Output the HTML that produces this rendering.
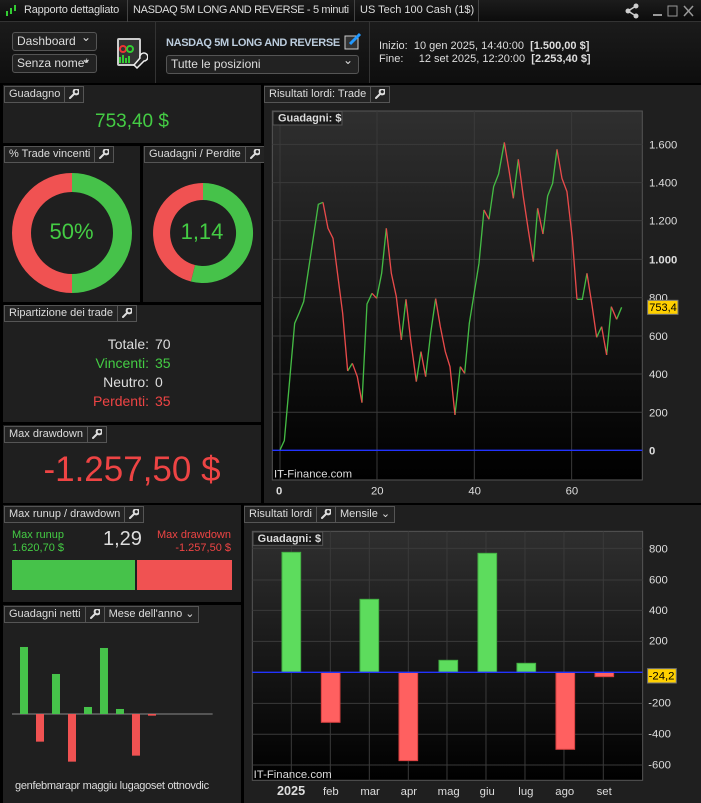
<!DOCTYPE html>
<html><head><meta charset="utf-8"><style>
*{margin:0;padding:0;box-sizing:border-box}
body{width:701px;height:803px;background:#000;font-family:"Liberation Sans",sans-serif;position:relative;overflow:hidden;color:#ddd}
.a{position:absolute}
.p{position:absolute;background:#1f1f1f}
.tab{position:absolute;height:17px;border:1px solid #555;background:#232323;font-size:11px;line-height:15px;color:#ddd;display:flex}
.tab span{padding:0 4px;border-right:1px solid #555;white-space:nowrap}
.tab span:last-child{border-right:none}
.tab svg{margin-top:2px}
.sel{position:absolute;border:1px solid #555;background:#222;border-radius:3px;font-size:12px;color:#ddd;padding-left:4px;line-height:17px;height:19px}
.sel:after{content:"⌄";position:absolute;right:5px;top:-4px;font-size:12px}
</style></head><body>
<svg width="0" height="0" style="position:absolute"><defs><symbol id="w" viewBox="0 0 10 10"><path d="M1 9L5.5 4.5M5 4 a2.6 2.6 0 1 1 1 1" stroke="#ddd" stroke-width="2" fill="none" stroke-linecap="round"/></symbol></defs></svg>
<!-- title bar -->
<div class="a" style="left:0;top:0;width:701px;height:22px;background:linear-gradient(#1c1c1c,#0c0c0c);border-bottom:1px solid #333"></div>
<svg class="a" style="left:5px;top:4px" width="14" height="14"><rect x="1" y="7" width="2" height="5" fill="#3c3"/><rect x="5" y="4" width="2" height="6" fill="#3c3"/><rect x="9" y="1" width="2" height="6" fill="#3c3"/></svg>
<div class="a" style="left:24px;top:4px;font-size:11px;color:#ddd;letter-spacing:-0.2px">Rapporto dettagliato</div>
<div class="a" style="left:127px;top:0;width:1px;height:22px;background:#444"></div>
<div class="a" style="left:133px;top:4px;font-size:11px;color:#ddd;white-space:nowrap;letter-spacing:-0.35px">NASDAQ 5M LONG AND REVERSE - 5 minuti</div>
<div class="a" style="left:354px;top:0;width:1px;height:22px;background:#444"></div>
<div class="a" style="left:360px;top:4px;font-size:11px;color:#ddd;white-space:nowrap">US Tech 100 Cash (1$)</div>
<div class="a" style="left:478px;top:0;width:1px;height:22px;background:#444"></div>
<svg class="a" style="left:625px;top:3px" width="76" height="16"><g fill="#ccc"><circle cx="11" cy="3" r="2.5"/><circle cx="3" cy="8" r="2.5"/><circle cx="11" cy="13" r="2.5"/></g><path d="M11 3L3 8L11 13" stroke="#ccc" stroke-width="1.5" fill="none"/><rect x="28" y="11" width="9" height="2" fill="#999"/><rect x="43" y="3" width="9" height="10" fill="none" stroke="#999"/><path d="M59 3l9 10M68 3l-9 10" stroke="#999" stroke-width="1.5"/></svg>
<!-- toolbar -->
<div class="a" style="left:0;top:22px;width:701px;height:61px;background:linear-gradient(#1b1b1b,#0e0e0e)"></div>
<div class="sel" style="left:12px;top:32px;width:85px">Dashboard</div>
<div class="sel" style="left:12px;top:54px;width:85px">Senza nome*</div>
<svg class="a" style="left:116px;top:37px" width="32" height="32"><rect x="1" y="1" width="24" height="28" rx="2" fill="#ccc"/><rect x="3" y="3" width="20" height="24" fill="#333"/><circle cx="7" cy="12" r="3" fill="none" stroke="#e33" stroke-width="2"/><circle cx="14" cy="12" r="3" fill="none" stroke="#3c3" stroke-width="2"/><path d="M4 26V20M7 26V18M10 26V21M13 26V19" stroke="#3c3" stroke-width="2"/><path d="M18 28l6-7 a4 4 0 1 1 4 3l-7 7z" fill="#222" stroke="#eee" stroke-width="1.5"/></svg>
<div class="a" style="left:155px;top:22px;width:1px;height:61px;background:#333"></div>
<div class="a" style="left:166px;top:37px;font-size:11px;font-weight:bold;color:#bcd;letter-spacing:-0.35px;white-space:nowrap">NASDAQ 5M LONG AND REVERSE</div>
<svg class="a" style="left:344px;top:31px" width="20" height="20"><rect x="1" y="5" width="13" height="13" fill="#333" stroke="#ccc"/><path d="M6 13l10-10" stroke="#29f" stroke-width="3"/></svg>
<div class="sel" style="left:166px;top:55px;width:193px">Tutte le posizioni</div>
<div class="a" style="left:369px;top:22px;width:1px;height:61px;background:#333"></div>
<div class="a" style="left:379px;top:40px;font-size:11px;color:#ddd;line-height:13px;white-space:pre">Inizio:  10 gen 2025, 14:40:00  <b>[1.500,00 $]</b>
Fine:     12 set 2025, 12:20:00  <b>[2.253,40 $]</b></div>

<!-- left panels -->
<div class="p" style="left:3px;top:85px;width:258px;height:58px"></div>
<div class="tab" style="left:4px;top:86px"><span>Guadagno</span><span><svg width="10" height="10"><use href="#w"/></svg></span></div>
<div class="a" style="left:3px;top:111px;width:258px;text-align:center;font-size:19px;color:#4c4">753,40 $</div>

<div class="p" style="left:3px;top:146px;width:137px;height:156px"></div>
<div class="tab" style="left:4px;top:146px"><span>% Trade vincenti</span><span><svg width="10" height="10"><use href="#w"/></svg></span></div>
<div class="p" style="left:143px;top:146px;width:118px;height:156px"></div>
<div class="tab" style="left:144px;top:146px"><span>Guadagni / Perdite</span><span><svg width="10" height="10"><use href="#w"/></svg></span></div>
<svg class="a" style="left:0;top:0" width="265" height="300">
<path d="M72 173A60 60 0 0 1 72 293L72 274A41 41 0 0 0 72 192Z" fill="#46c24a"/>
<path d="M72 173A60 60 0 0 0 72 293L72 274A41 41 0 0 1 72 192Z" fill="#f05252"/>
<path d="M203 183A50 50 0 1 1 190.9 281.5L195 265A33 33 0 1 0 203 200Z" fill="#46c24a"/>
<path d="M203 183A50 50 0 0 0 190.9 281.5L195 265A33 33 0 0 1 203 200Z" fill="#f05252"/>
</svg>
<div class="a" style="left:3px;top:219px;width:137px;text-align:center;font-size:22px;color:#4c4">50%</div>
<div class="a" style="left:143px;top:219px;width:118px;text-align:center;font-size:22px;color:#4c4">1,14</div>

<div class="p" style="left:3px;top:305px;width:258px;height:117px"></div>
<div class="tab" style="left:4px;top:305px"><span>Ripartizione dei trade</span><span><svg width="10" height="10"><use href="#w"/></svg></span></div>
<div class="a" style="left:0;top:335px;width:149px;text-align:right;font-size:14px;line-height:19px">Totale:<br><span style="color:#4c4">Vincenti:</span><br>Neutro:<br><span style="color:#e44">Perdenti:</span></div>
<div class="a" style="left:155px;top:335px;font-size:14px;line-height:19px">70<br><span style="color:#4c4">35</span><br>0<br><span style="color:#e44">35</span></div>

<div class="p" style="left:3px;top:425px;width:258px;height:78px"></div>
<div class="tab" style="left:4px;top:426px"><span>Max drawdown</span><span><svg width="10" height="10"><use href="#w"/></svg></span></div>
<div class="a" style="left:3px;top:450px;width:258px;text-align:center;font-size:35px;color:#ee4444">-1.257,50 $</div>

<!-- line chart panel -->
<div class="p" style="left:264px;top:85px;width:437px;height:418px"></div>
<div class="tab" style="left:264px;top:86px"><span>Risultati lordi: Trade</span><span><svg width="10" height="10"><use href="#w"/></svg></span></div>
<svg class="a" style="left:0;top:0" width="701" height="803">
<defs><linearGradient id="g" x1="0" y1="0" x2="0" y2="1"><stop offset="0" stop-color="#2f2f2f"/><stop offset="1" stop-color="#000"/></linearGradient></defs>
<g transform="translate(260 100) scale(0.3333)">
<rect x="37" y="33" width="1110" height="1107" fill="url(#g)" stroke="#555" stroke-width="3"/>
<g stroke="#3a3a3a" stroke-width="3">
<path d="M37 133H1147M37 248H1147M37 362H1147M37 478H1147M37 593H1147M37 708H1147M37 822H1147M37 937H1147M60 33V1140M351 33V1140M643 33V1140M935 33V1140"/>
</g>
<path d="M37 1051H1147" stroke="#2233ff" stroke-width="4"/>
<g fill="none" stroke-width="4">
<g stroke="#44bb44">
<polyline points="60,1050 73,1022 104,670 118,638 131,605 175,313 189,307"/>
<polyline points="263,813 277,790"/><polyline points="306,908 321,612 336,580"/>
<polyline points="350,595 365,520 379,385"/><polyline points="424,720 438,598"/>
<polyline points="469,845 483,755"/><polyline points="497,830 512,700 527,596"/>
<polyline points="585,945 601,800"/><polyline points="614,820 628,670 657,490 672,330"/>
<polyline points="687,358 701,260 716,222 733,127"/><polyline points="760,295 775,178"/>
<polyline points="820,485 833,325"/><polyline points="849,402 863,288 878,250 891,148"/>
<polyline points="951,598 967,598 981,520"/><polyline points="1010,712 1025,680"/>
<polyline points="1040,765 1054,620"/><polyline points="1070,658 1085,622"/>
</g>
<g stroke="#e84a4a">
<polyline points="189,307 204,385 219,415 248,640 263,813"/><polyline points="277,790 292,830 306,908"/>
<polyline points="336,580 350,595"/><polyline points="379,385 394,520 409,590 424,720"/>
<polyline points="438,598 452,720 469,845"/><polyline points="483,755 497,830"/>
<polyline points="527,596 541,680 556,755 570,800 585,945"/><polyline points="601,800 614,820"/>
<polyline points="672,330 687,358"/><polyline points="733,127 747,210 760,295"/>
<polyline points="775,178 790,290 805,390 820,485"/><polyline points="833,325 849,402"/>
<polyline points="891,148 906,235 921,275 937,415 951,598"/><polyline points="981,520 996,615 1010,712"/>
<polyline points="1025,680 1040,765"/><polyline points="1054,620 1070,658"/>
</g></g>
<g fill="#ddd" font-size="34" font-family="Liberation Sans">
<text x="1167" y="145">1.600</text><text x="1167" y="260">1.400</text><text x="1167" y="374">1.200</text><text x="1167" y="490" font-weight="bold">1.000</text><text x="1167" y="605">800</text><text x="1167" y="720">600</text><text x="1167" y="834">400</text><text x="1167" y="949">200</text><text x="1167" y="1063" font-weight="bold">0</text>
<text x="48" y="1184" font-weight="bold">0</text><text x="333" y="1184">20</text><text x="625" y="1184">40</text><text x="917" y="1184">60</text>
<text x="42" y="1132">IT-Finance.com</text>
</g>
<rect x="1163" y="601" width="91" height="42" fill="#ffd000" stroke="#777" stroke-width="3"/>
<text x="1168" y="633" font-size="33" fill="#000" font-family="Liberation Sans">753,4</text>
<rect x="39" y="35" width="207" height="40" fill="#1a1a1a" stroke="#555" stroke-width="3"/>
<text x="54" y="65" font-size="33" fill="#ddd" font-weight="bold" font-family="Liberation Sans">Guadagni: $</text>
</g>

<!-- bar chart -->
<g transform="translate(245 500) scale(0.3333)">
<rect x="22" y="94" width="1171" height="747" fill="url(#g)" stroke="#555" stroke-width="3"/>
<g stroke="#3a3a3a" stroke-width="3"><path d="M22 145H1193M22 240H1193M22 331H1193M22 424H1193M22 610H1193M22 703H1193M22 795H1193M139 94V841M256 94V841M373 94V841M490 94V841M606 94V841M723 94V841M840 94V841M957 94V841M1075 94V841"/></g>
<g fill="#5ddc5d" stroke="#44b044" stroke-width="3">
<rect x="111" y="157" width="56" height="360"/><rect x="345" y="298" width="56" height="219"/><rect x="582" y="481" width="56" height="36"/><rect x="699" y="160" width="56" height="357"/><rect x="816" y="490" width="56" height="27"/></g>
<g fill="#ff6060" stroke="#d84040" stroke-width="3">
<rect x="229" y="517" width="56" height="150"/><rect x="462" y="517" width="56" height="265"/><rect x="933" y="517" width="56" height="231"/><rect x="1050" y="517" width="56" height="13"/></g>
<path d="M22 517H1193" stroke="#2233ff" stroke-width="4"/>
<g fill="#ddd" font-size="34" font-family="Liberation Sans">
<text x="1212" y="157">800</text><text x="1212" y="250">600</text><text x="1212" y="342">400</text><text x="1212" y="433">200</text><text x="1210" y="619">-200</text><text x="1210" y="712">-400</text><text x="1210" y="805">-600</text>
<text x="96" y="885" font-weight="bold" font-size="38">2025</text><text x="234" y="885">feb</text><text x="346" y="885">mar</text><text x="467" y="885">apr</text><text x="578" y="885">mag</text><text x="704" y="885">giu</text><text x="820" y="885">lug</text><text x="931" y="885">ago</text><text x="1055" y="885">set</text>
<text x="26" y="834">IT-Finance.com</text></g>
<rect x="1208" y="506" width="86" height="43" fill="#ffd000" stroke="#777" stroke-width="3"/>
<text x="1211" y="539" font-size="34" fill="#000" font-family="Liberation Sans">-24,2</text>
<rect x="24" y="96" width="209" height="40" fill="#1a1a1a" stroke="#555" stroke-width="3"/>
<text x="38" y="126" font-size="33" fill="#ddd" font-weight="bold" font-family="Liberation Sans">Guadagni: $</text>
</g>
</svg>

<!-- bottom left -->
<div class="p" style="left:3px;top:505px;width:238px;height:97px"></div>
<div class="tab" style="left:4px;top:506px"><span>Max runup / drawdown</span><span><svg width="10" height="10"><use href="#w"/></svg></span></div>
<div class="a" style="left:12px;top:529px;font-size:11px;color:#4c4;line-height:13px">Max runup<br>1.620,70 $</div>
<div class="a" style="left:103px;top:528px;font-size:20px;color:#ddd">1,29</div>
<div class="a" style="left:150px;top:529px;width:81px;text-align:right;font-size:11px;color:#e44;line-height:13px">Max drawdown<br>-1.257,50 $</div>
<div class="a" style="left:12px;top:560px;width:123px;height:30px;background:#46c24a"></div>
<div class="a" style="left:137px;top:560px;width:95px;height:30px;background:#f05252"></div>

<div class="p" style="left:3px;top:605px;width:238px;height:198px"></div>
<div class="tab" style="left:4px;top:606px"><span>Guadagni netti</span><span><svg width="10" height="10"><use href="#w"/></svg></span><span>Mese dell'anno ⌄</span></div>
<svg class="a" style="left:0;top:500px" width="250" height="303"><g transform="scale(0.3333)">
<path d="M36 642H638" stroke="#888" stroke-width="3"/>
<g fill="#46c24a"><rect x="60" y="441" width="24" height="201"/><rect x="156" y="522" width="24" height="120"/><rect x="252" y="621" width="24" height="21"/><rect x="300" y="444" width="24" height="198"/><rect x="348" y="627" width="24" height="15"/></g>
<g fill="#f05252"><rect x="108" y="642" width="24" height="83"/><rect x="204" y="642" width="24" height="143"/><rect x="396" y="642" width="24" height="125"/><rect x="444" y="642" width="24" height="5"/></g>
</g></svg>
<div class="a" style="left:15px;top:780px;font-size:11px;color:#ddd;letter-spacing:-0.3px">genfebmarapr maggiu lugagoset ottnovdic</div>

<div class="p" style="left:244px;top:505px;width:457px;height:298px;z-index:-1"></div>
<div class="tab" style="left:244px;top:506px"><span>Risultati lordi</span><span><svg width="10" height="10"><use href="#w"/></svg></span><span>Mensile ⌄</span></div>
</body></html>
